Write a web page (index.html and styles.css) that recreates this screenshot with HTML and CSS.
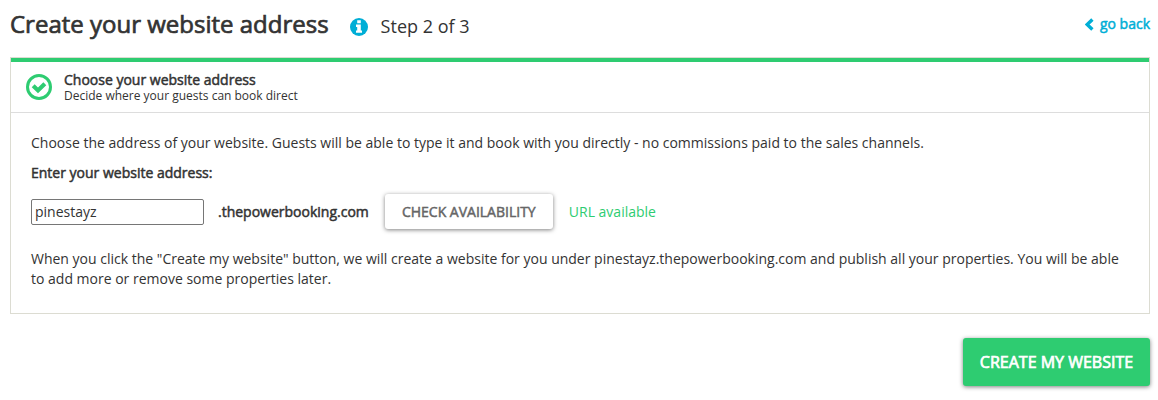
FILE: index.html
```html
<!DOCTYPE html>
<html lang="en">
<head>
    <meta charset="UTF-8">
    <meta name="viewport" content="width=device-width, initial-scale=1.0">
    <title>Create your website address</title>
    <link rel="stylesheet" href="styles.css">
</head>
<body>
    <div class="header">
        <h1>Create your website address</h1>
        <svg class="info" width="18" height="18" viewBox="0 0 18 18">
            <circle cx="9" cy="9" r="9" fill="#00aed6"/>
            <path d="M7.2 2.2h3.6v3H7.2zM6 6.6h4.8v5.8H12v2.4H6v-2.4h1.2V9H6z" fill="#fff"/>
        </svg>
        <span class="step">Step 2 of 3</span>
        <a class="back" href="#">
            <svg width="10" height="13" viewBox="0 0 10 13"><path d="M7.4 1.6L2.2 6.5l5.2 4.9" fill="none" stroke="#00aed6" stroke-width="3.4"/></svg>
            go back
        </a>
    </div>
    <div class="panel">
        <div class="panel-header">
            <svg width="26" height="26" viewBox="0 0 26 26" fill="none" stroke="#2ecc71">
                <circle cx="13" cy="13" r="11.5" stroke-width="3"/>
                <path d="M7.2 11.8l4.8 4.6 6.8-6.6" stroke-width="4.2"/>
            </svg>
            <div class="panel-heading">
                <div class="panel-title">Choose your website address</div>
                <div class="panel-subtitle">Decide where your guests can book direct</div>
            </div>
        </div>
        <div class="panel-body">
            <p>Choose the address of your website. Guests will be able to type it and book with you directly - no commissions paid to the sales channels.</p>
            <label for="address">Enter your website address:</label>
            <div class="address-row">
                <input type="text" id="address" value="pinestayz">
                <span class="domain">.thepowerbooking.com</span>
                <button type="button" class="btn btn-check">CHECK AVAILABILITY</button>
                <span class="available">URL available</span>
            </div>
            <p>When you click the "Create my website" button, we will create a website for you under pinestayz.thepowerbooking.com and publish all your properties. You will be able to add more or remove some properties later.</p>
        </div>
    </div>
    <div class="footer">
        <button type="button" class="btn btn-create">CREATE MY WEBSITE</button>
    </div>
</body>
</html>
```
FILE: styles.css
```css
* {
    box-sizing: border-box;
}
body {
    font-family: 'Open Sans', sans-serif;
    font-size: 14px;
    line-height: 20px;
    color: #333;
    margin: 0;
    padding: 0 8px 0 10px;
    background: #fff;
}
.header {
    display: flex;
    align-items: center;
    height: 57px;
    padding-bottom: 3px;
}
h1 {
    margin: 0 21px 0 0;
    font-size: 24px;
    line-height: 32px;
    font-weight: 400;
    -webkit-text-stroke: 0.7px #333;
    padding-bottom: 7px;
}
.step {
    margin-left: 13px;
    font-size: 18px;
    padding-bottom: 2px;
}
.back {
    display: flex;
    align-items: center;
    gap: 5px;
    margin-left: auto;
    padding-bottom: 6px;
    color: #00aed6;
    text-decoration: none;
    -webkit-text-stroke: 0.5px #00aed6;
}
.panel {
    height: 257px;
    border: 1px solid #dcdcd2;
}
.panel-header {
    display: flex;
    align-items: center;
    gap: 12px;
    height: 55px;
    padding-left: 15px;
    border-top: 4px solid #2ecc71;
    border-bottom: 1px solid #ddd;
}
.panel-heading {
    padding-top: 2px;
}
.panel-title {
    line-height: 16px;
    -webkit-text-stroke: 0.5px #333;
}
.panel-subtitle {
    font-size: 12px;
    line-height: 16px;
}
.panel-body {
    padding: 20px;
}
p {
    margin: 0 0 10px;
}
label {
    display: block;
    -webkit-text-stroke: 0.5px #333;
}
.address-row {
    display: flex;
    align-items: center;
    margin: 11px 0 20px;
}
input {
    width: 173px;
    height: 26px;
    padding: 1px 3px;
    border: 1px solid #767676;
    border-radius: 2px;
    font: inherit;
    color: #333;
}
.domain {
    margin: 0 16px 0 14px;
    -webkit-text-stroke: 0.5px #333;
}
.btn {
    border: none;
    border-radius: 3px;
    font-family: inherit;
    padding: 0;
    white-space: nowrap;
    box-shadow: 0 1px 4px rgba(0, 0, 0, 0.5);
}
.btn-check {
    width: 168px;
    height: 35px;
    background: #fff;
    color: #666;
    font-size: 14px;
    -webkit-text-stroke: 0.5px #666;
}
.available {
    margin-left: 16px;
    color: #2ecc71;
}
.footer {
    display: flex;
    justify-content: flex-end;
    padding: 24px 0 14px;
}
.btn-create {
    width: 187px;
    height: 48px;
    background: #2ecc71;
    color: #fff;
    font-size: 16px;
    -webkit-text-stroke: 0.7px #fff;
}
```
